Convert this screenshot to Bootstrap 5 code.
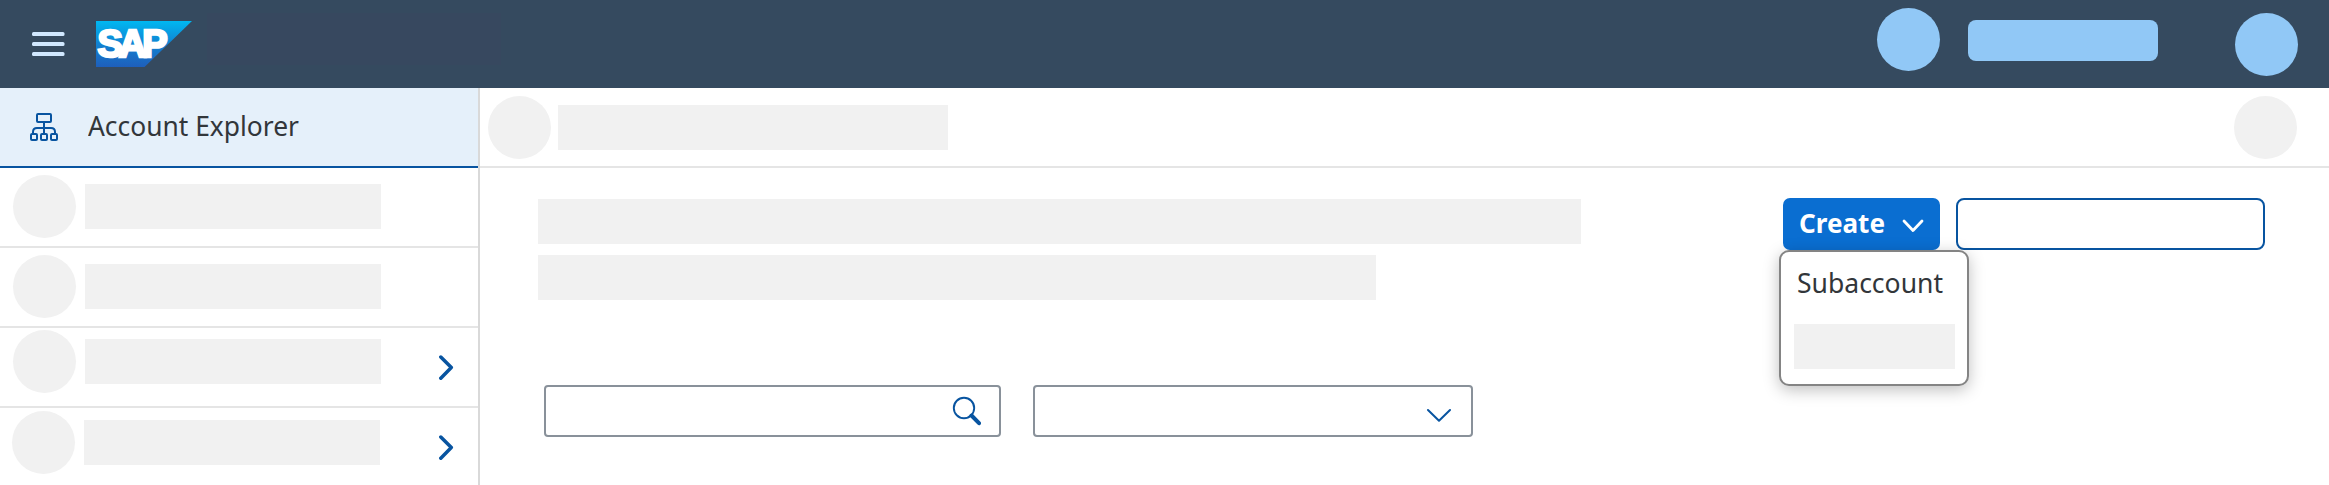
<!DOCTYPE html>
<html lang="en">
<head>
<meta charset="utf-8">
<title>Account Explorer</title>
<link href="https://cdn.jsdelivr.net/npm/bootstrap@5.3.0/dist/css/bootstrap.min.css" rel="stylesheet">
<style>
body{font-family:"Noto Sans",sans-serif;background:#fff;color:#32363a;height:485px;overflow:hidden}
svg{display:block;flex:none}
.shell{height:88px;background:#354a5f;padding:0 31px 0 32px}
.space-holder{width:294px;height:52px;background:#37485f;margin:13px 0 0 15px}
.dot{width:63px;height:63px;border-radius:50%;background:#f1f1f1;flex:none}
.bone{height:45px;background:#f1f1f1;flex:none}
.sky{background:#91c8f6}
.pill{width:190px;height:41px;border-radius:8px}
.side{width:480px;height:397px;border-right:2px solid #d9d9d9;flex:none}
.side-item{height:80px;border-bottom:2px solid #e5e5e5;padding-left:13px}
.side-item .bone{width:296px;margin:9px 0 0 9px}
.side-item.picked{background:#e5f0fa;border-color:#0854a0;padding-left:30px}
.crumbs{height:80px;border-bottom:2px solid #e5e5e5;padding:8px 32px 0 8px}
.create-btn{width:157px;height:52px;border-radius:7px;background:#0a6ed1;padding:0 16px;border:0}
.create-btn:hover{background:#0a6ed1}
.ghost-btn{width:309px;height:52px;border:2px solid #0854a0;border-radius:8px;background:#fff;margin-left:16px}
.create-menu{display:block;top:52px;left:-4px;min-width:0;width:190px;height:136px;border:2px solid #848484;border-radius:10px;padding:0;background:#fff;box-shadow:0 4px 16px rgba(0,0,0,.25)}
.field{height:52px;border:2px solid #89919a;border-radius:4px;background:#fff}
</style>
</head>
<body>
<header class="shell d-flex align-items-start">
  <svg width="33" height="24" viewBox="0 0 33 24" style="margin:32px -1px 0 0" fill="#d1e8ff"><rect width="32.500" height="4" rx="1.500"/><rect y="10" width="32.500" height="4" rx="1.500"/><rect y="20" width="32.500" height="4" rx="1.500"/></svg>
  <svg width="96" height="46" viewBox="0 0 96 46" style="margin:21px 0 0 32px"><defs><linearGradient id="g" x2="0" y2="1"><stop stop-color="#00b8f1"/><stop offset=".5" stop-color="#1182d2"/><stop offset="1" stop-color="#1e5fbb"/></linearGradient></defs><path d="M0 0H96L48.500 46H0Z" fill="url(#g)"/><g font-family="Liberation Sans" font-weight="700" font-size="38" fill="#fff" stroke="#fff" stroke-width="2.600"><text y="35.800" x="1.500" textLength="70" lengthAdjust="spacing">SAP</text></g></svg>
  <div class="space-holder"></div>
  <div class="dot sky ms-auto" style="margin-top:8px"></div>
  <div class="pill sky" style="margin:20px 77px 0 28px"></div>
  <div class="dot sky" style="margin-top:13px"></div>
</header>
<div class="d-flex">
  <nav class="side">
    <div class="side-item picked d-flex align-items-start">
      <svg width="28" height="28" viewBox="0 0 28 28" style="margin-top:25px" fill="none" stroke="#0854a0" stroke-width="2"><rect x="7" y="1" width="14" height="8" rx="1"/><path d="M14 9V21M3 21V19Q3 15 7 15H21Q25 15 25 19V21"/><rect x="1" y="21" width="6" height="6" rx="1"/><rect x="11" y="21" width="6" height="6" rx="1"/><rect x="21" y="21" width="6" height="6" rx="1"/></svg>
      <svg width="220" height="40" style="margin:19px 0 0 30px"><text x="0" y="29" font-size="27" textLength="211" lengthAdjust="spacingAndGlyphs" fill="#32363a">Account Explorer</text></svg>
    </div>
    <div class="side-item d-flex align-items-start" style="padding-top:7px"><div class="dot"></div><div class="bone"></div></div>
    <div class="side-item d-flex align-items-start" style="padding-top:7px"><div class="dot"></div><div class="bone"></div></div>
    <div class="side-item d-flex align-items-start" style="padding-top:2px"><div class="dot"></div><div class="bone"></div>
      <svg width="16" height="26" viewBox="0 0 16 26" style="margin:25px 0 0 57px" fill="none" stroke="#0854a0" stroke-width="3.500" stroke-linecap="round" stroke-linejoin="round"><path d="M2.800 2L13.300 12.600L2.800 23.200"/></svg></div>
    <div class="side-item border-0 d-flex align-items-start" style="padding:3px 0 0 12px"><div class="dot"></div><div class="bone"></div>
      <svg width="16" height="26" viewBox="0 0 16 26" style="margin:24px 0 0 58px" fill="none" stroke="#0854a0" stroke-width="3.500" stroke-linecap="round" stroke-linejoin="round"><path d="M2.800 2L13.300 12.600L2.800 23.200"/></svg></div>
  </nav>
  <main class="flex-grow-1">
    <div class="crumbs d-flex align-items-start"><div class="dot"></div><div class="bone" style="width:390px;margin:9px 0 0 7px"></div><div class="dot ms-auto"></div></div>
    <div class="d-flex align-items-start" style="padding:30px 64px 0 58px">
      <div>
        <div class="bone" style="width:1043px;margin-top:1px"></div>
        <div class="bone" style="width:838px;margin-top:11px"></div>
      </div>
      <div class="d-flex position-relative ms-auto">
        <button class="btn create-btn d-flex align-items-center justify-content-between">
          <svg width="90" height="40"><text x="0" y="29" font-size="27" font-weight="700" textLength="86" lengthAdjust="spacingAndGlyphs" fill="#fff">Create</text></svg>
          <svg width="22" height="14" viewBox="0 0 22 14" style="margin-top:4px" fill="none" stroke="#fff" stroke-width="2.800" stroke-linecap="round" stroke-linejoin="round"><path d="M2 2L11 11.500L20 2"/></svg>
        </button>
        <div class="ghost-btn"></div>
        <div class="dropdown-menu create-menu">
          <svg width="160" height="40" style="margin:12px 0 0 16px"><text x="0" y="29" font-size="27" textLength="146" lengthAdjust="spacingAndGlyphs" fill="#32363a">Subaccount</text></svg>
          <div class="bone" style="width:161px;margin:20px 0 0 13px"></div>
        </div>
      </div>
    </div>
    <div class="d-flex" style="padding:85px 0 0 64px">
      <div class="field d-flex" style="width:457px"><svg width="30" height="30" viewBox="0 0 30 30" class="ms-auto" style="margin:9px 18px 0 0" fill="none" stroke="#0854a0"><circle cx="13" cy="12" r="10.200" stroke-width="1.900"/><path d="M20.500 19.500L28 27.200" stroke-width="4" stroke-linecap="round"/></svg></div>
      <div class="field d-flex" style="width:440px;margin-left:32px"><svg width="26" height="14" viewBox="0 0 26 14" class="ms-auto" style="margin:21px 19px 0 0" fill="none" stroke="#0854a0" stroke-width="2" stroke-linecap="round" stroke-linejoin="round"><path d="M2 2L13 12.800L24 2"/></svg></div>
    </div>
  </main>
</div>
<script src="https://cdn.jsdelivr.net/npm/bootstrap@5.3.0/dist/js/bootstrap.bundle.min.js"></script>
</body>
</html>
